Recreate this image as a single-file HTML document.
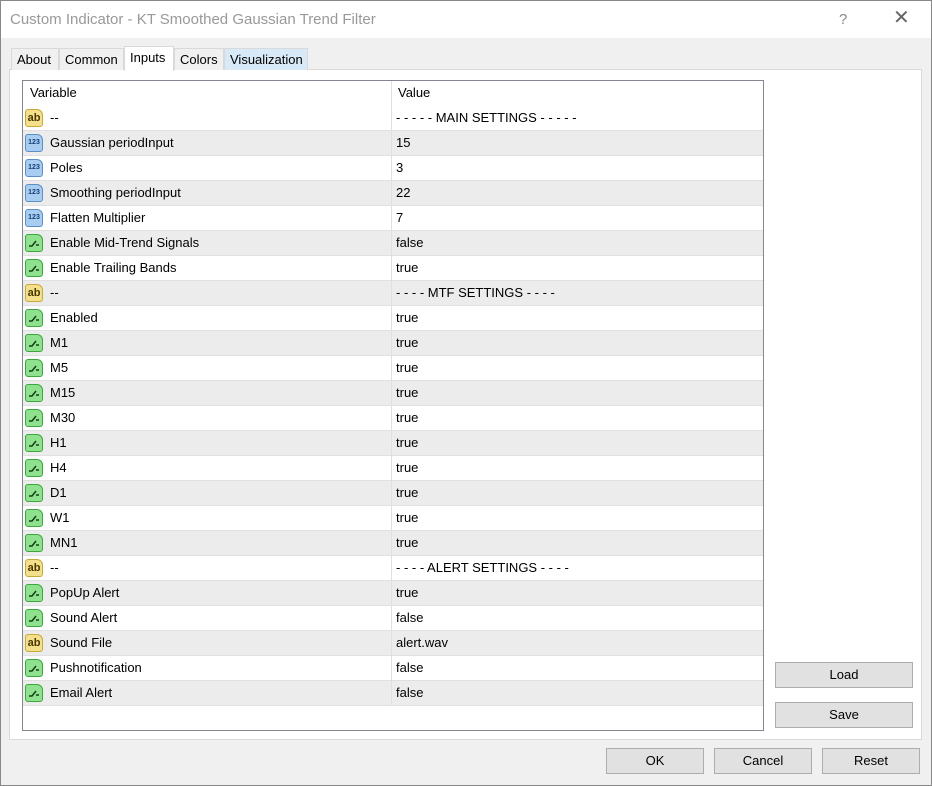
<!DOCTYPE html>
<html><head><meta charset="utf-8"><style>
*{box-sizing:border-box;margin:0;padding:0}
body{width:932px;height:786px;background:#f0f0f0;font-family:"Liberation Sans",sans-serif;font-size:13px;color:#000;position:relative;overflow:hidden}
.win{position:absolute;left:0;top:0;width:932px;height:786px;border:1px solid #888}
.title{position:absolute;left:1px;top:1px;width:930px;height:37px;background:#fff;color:#999;font-size:15px;line-height:37px;padding-left:9px}
.q{position:absolute;left:838px;top:0;color:#888;font-size:15px}
.x{position:absolute;left:892px;top:-1px;color:#666;font-size:20px}
.tab{position:absolute;top:48px;height:22px;border:1px solid #d9d9d9;border-bottom:none;background:#f0f0f0;line-height:21px;padding-left:5px}
.panel{position:absolute;left:9px;top:69px;width:913px;height:671px;background:#fff;border:1px solid #d9d9d9}
.tbl{position:absolute;left:22px;top:80px;width:742px;height:651px;border:1px solid #828790;background:#fff;overflow:hidden}
.row{position:relative;width:740px;height:25px;border-bottom:1px solid #e0e0e0;line-height:24px}
.row.g{background:#ececec}
.v{position:absolute;left:27px}
.w{position:absolute;left:373px}
.d{position:absolute;left:368px;top:0;width:1px;height:25px;background:#e0e0e0}
.ic{position:absolute;left:2px;top:3px;width:18px;height:18px;border-radius:3px 6px 3px 3px;font-weight:bold;line-height:16px;text-align:center}
.ab{background:#f4e08a;border:1px solid #c9a93a;color:#4a3800;font-size:11px}
.n{background:#a8cdf0;border:1px solid #5a8fc8;color:#123e78;font-size:7px}
.b{background:#8fe08f;border:1px solid #3aa83a}
.b svg{position:absolute;left:1px;top:1px}
.btn{position:absolute;height:26px;background:#e1e1e1;border:1px solid #adadad;text-align:center;line-height:24px;font-size:13px}
</style></head><body><div class="win"></div>
<div class="title">Custom Indicator - KT Smoothed Gaussian Trend Filter<span class="q">?</span><span class="x">✕</span></div>
<div class="panel"></div>
<div class="tab" style="left:11px;width:48px">About</div>
<div class="tab" style="left:59px;width:65px">Common</div>
<div class="tab" style="left:124px;top:46px;height:25px;width:50px;background:#fff;z-index:2">Inputs</div>
<div class="tab" style="left:174px;width:50px">Colors</div>
<div class="tab" style="left:224px;width:84px;background:#d8e9f8">Visualization</div>
<div class="tbl">
<div class="row" style="border-bottom:none"><span class="v" style="left:7px">Variable</span><span class="w" style="left:375px">Value</span><span class="d"></span></div>
<div class="row"><span class="ic ab">ab</span><span class="v">--</span><span class="d"></span><span class="w">- - - - - MAIN SETTINGS - - - - -</span></div>
<div class="row g"><span class="ic n">123</span><span class="v">Gaussian periodInput</span><span class="d"></span><span class="w">15</span></div>
<div class="row"><span class="ic n">123</span><span class="v">Poles</span><span class="d"></span><span class="w">3</span></div>
<div class="row g"><span class="ic n">123</span><span class="v">Smoothing periodInput</span><span class="d"></span><span class="w">22</span></div>
<div class="row"><span class="ic n">123</span><span class="v">Flatten Multiplier</span><span class="d"></span><span class="w">7</span></div>
<div class="row g"><span class="ic b"><svg width="14" height="14"><path d="M2 10h3l4-5M9 9h3" stroke="#124012" stroke-width="1.5" fill="none"/></svg></span><span class="v">Enable Mid-Trend Signals</span><span class="d"></span><span class="w">false</span></div>
<div class="row"><span class="ic b"><svg width="14" height="14"><path d="M2 10h3l4-5M9 9h3" stroke="#124012" stroke-width="1.5" fill="none"/></svg></span><span class="v">Enable Trailing Bands</span><span class="d"></span><span class="w">true</span></div>
<div class="row g"><span class="ic ab">ab</span><span class="v">--</span><span class="d"></span><span class="w">- - - - MTF SETTINGS - - - -</span></div>
<div class="row"><span class="ic b"><svg width="14" height="14"><path d="M2 10h3l4-5M9 9h3" stroke="#124012" stroke-width="1.5" fill="none"/></svg></span><span class="v">Enabled</span><span class="d"></span><span class="w">true</span></div>
<div class="row g"><span class="ic b"><svg width="14" height="14"><path d="M2 10h3l4-5M9 9h3" stroke="#124012" stroke-width="1.5" fill="none"/></svg></span><span class="v">M1</span><span class="d"></span><span class="w">true</span></div>
<div class="row"><span class="ic b"><svg width="14" height="14"><path d="M2 10h3l4-5M9 9h3" stroke="#124012" stroke-width="1.5" fill="none"/></svg></span><span class="v">M5</span><span class="d"></span><span class="w">true</span></div>
<div class="row g"><span class="ic b"><svg width="14" height="14"><path d="M2 10h3l4-5M9 9h3" stroke="#124012" stroke-width="1.5" fill="none"/></svg></span><span class="v">M15</span><span class="d"></span><span class="w">true</span></div>
<div class="row"><span class="ic b"><svg width="14" height="14"><path d="M2 10h3l4-5M9 9h3" stroke="#124012" stroke-width="1.5" fill="none"/></svg></span><span class="v">M30</span><span class="d"></span><span class="w">true</span></div>
<div class="row g"><span class="ic b"><svg width="14" height="14"><path d="M2 10h3l4-5M9 9h3" stroke="#124012" stroke-width="1.5" fill="none"/></svg></span><span class="v">H1</span><span class="d"></span><span class="w">true</span></div>
<div class="row"><span class="ic b"><svg width="14" height="14"><path d="M2 10h3l4-5M9 9h3" stroke="#124012" stroke-width="1.5" fill="none"/></svg></span><span class="v">H4</span><span class="d"></span><span class="w">true</span></div>
<div class="row g"><span class="ic b"><svg width="14" height="14"><path d="M2 10h3l4-5M9 9h3" stroke="#124012" stroke-width="1.5" fill="none"/></svg></span><span class="v">D1</span><span class="d"></span><span class="w">true</span></div>
<div class="row"><span class="ic b"><svg width="14" height="14"><path d="M2 10h3l4-5M9 9h3" stroke="#124012" stroke-width="1.5" fill="none"/></svg></span><span class="v">W1</span><span class="d"></span><span class="w">true</span></div>
<div class="row g"><span class="ic b"><svg width="14" height="14"><path d="M2 10h3l4-5M9 9h3" stroke="#124012" stroke-width="1.5" fill="none"/></svg></span><span class="v">MN1</span><span class="d"></span><span class="w">true</span></div>
<div class="row"><span class="ic ab">ab</span><span class="v">--</span><span class="d"></span><span class="w">- - - - ALERT SETTINGS - - - -</span></div>
<div class="row g"><span class="ic b"><svg width="14" height="14"><path d="M2 10h3l4-5M9 9h3" stroke="#124012" stroke-width="1.5" fill="none"/></svg></span><span class="v">PopUp Alert</span><span class="d"></span><span class="w">true</span></div>
<div class="row"><span class="ic b"><svg width="14" height="14"><path d="M2 10h3l4-5M9 9h3" stroke="#124012" stroke-width="1.5" fill="none"/></svg></span><span class="v">Sound Alert</span><span class="d"></span><span class="w">false</span></div>
<div class="row g"><span class="ic ab">ab</span><span class="v">Sound File</span><span class="d"></span><span class="w">alert.wav</span></div>
<div class="row"><span class="ic b"><svg width="14" height="14"><path d="M2 10h3l4-5M9 9h3" stroke="#124012" stroke-width="1.5" fill="none"/></svg></span><span class="v">Pushnotification</span><span class="d"></span><span class="w">false</span></div>
<div class="row g"><span class="ic b"><svg width="14" height="14"><path d="M2 10h3l4-5M9 9h3" stroke="#124012" stroke-width="1.5" fill="none"/></svg></span><span class="v">Email Alert</span><span class="d"></span><span class="w">false</span></div>
</div>
<div class="btn" style="left:775px;top:662px;width:138px">Load</div>
<div class="btn" style="left:775px;top:702px;width:138px">Save</div>
<div class="btn" style="left:606px;top:748px;width:98px">OK</div>
<div class="btn" style="left:714px;top:748px;width:98px">Cancel</div>
<div class="btn" style="left:822px;top:748px;width:98px">Reset</div>
</body></html>
